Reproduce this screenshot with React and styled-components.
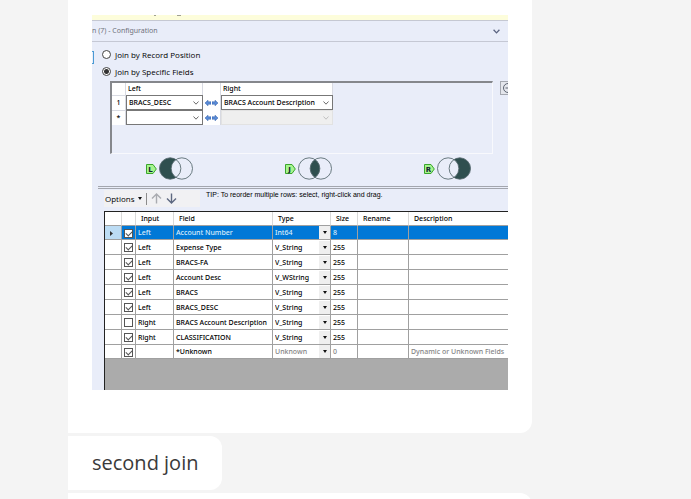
import React, { useState } from 'react';
import styled, { createGlobalStyle } from 'styled-components';

const GlobalStyle = createGlobalStyle`
    * {
        box-sizing: border-box;
    }

    body {
        margin: 0;
        background: #f4f4f4;
        font-family: 'Noto Sans', 'Open Sans', sans-serif;
        color: #1c1c1c;
    }

    button, input, select {
        margin: 0;
        font: inherit;
        color: inherit;
    }
`;

const Chat = styled.main`
    display: flex;
    flex-direction: column;
    align-items: flex-start;
    gap: 3px;
    height: 100vh;
    padding-left: 68px;
    overflow: hidden;
`;

const Bubble = styled.section`
    flex: none;
    width: ${props => props.$wide ? 'calc(100% - 24px)' : 'auto'};
    max-width: 464px;
    padding: ${props => props.$picture ? '15px 24px 43px' : '12px 24px'};
    border-radius: ${props => props.$picture ? '0 0 12px 0' : '0 12px 12px 0'};
    background: #fff;
    font-family: 'Open Sans', 'Noto Sans', sans-serif;
    font-size: 20px;
    line-height: 30px;
    color: #3a3a3a;
`;

const Window = styled.div`
    display: flex;
    flex-direction: column;
    overflow: hidden;
    background: #e9edf9;
    font-family: 'Noto Sans', 'Open Sans', sans-serif;
    font-size: 7px;
    font-weight: 500;
    line-height: 10px;
    color: #000;
`;

const Strip = styled.div`
    height: 6px;
    background: #fdfddb;
    border-bottom: 1px solid #c5c8d2;

    svg {
        display: block;
    }
`;

const TitleBar = styled.header`
    display: flex;
    align-items: center;
    justify-content: space-between;
    height: 21px;
    padding-right: 8px;
    border-bottom: 1px solid #c5c8d4;
    font-weight: 400;
    color: #6f727b;
`;

const IconButton = styled.button`
    display: flex;
    align-items: center;
    justify-content: center;
    padding: 0;
    border: 0;
    background: none;
`;

const Modes = styled.div`
    display: flex;
    gap: 8px;
    padding: 4px 0 1px;
`;

const SideTab = styled.div`
    width: 2px;
    height: 13px;
    margin-top: 5px;
    border: 1px solid #4a9ad4;
    border-left: 0;
`;

const RadioLabel = styled.label`
    display: flex;
    align-items: center;
    gap: 4px;
    height: 17px;
    font-family: 'Open Sans', 'Noto Sans', sans-serif;
    font-size: 8px;
    font-weight: 400;
`;

const Radio = styled.input`
    appearance: none;
    width: 9px;
    height: 9px;
    border: 1px solid #444;
    border-radius: 50%;
    background: #fff;

    &:checked {
        background: radial-gradient(circle, #333 0 2px, #fff 3px);
    }
`;

const JoinArea = styled.div`
    display: flex;
    gap: 7px;
    padding-left: 18px;
`;

const JoinBox = styled.div`
    flex: 1;
    height: 73px;
    border: 1px solid #f8f9fd;
    border-top: 2px solid #85878c;
    border-left: 2px solid #85878c;
`;

const JoinTable = styled.table`
    border-collapse: separate;
    border-spacing: 0;
    table-layout: fixed;
    width: 221px;
    background: #fff;

    th, td {
        height: 15px;
        padding: 0;
        border-right: 1px solid #d8dae2;
        font-weight: inherit;
        text-align: left;
    }

    td:nth-child(even) {
        border-right: 0;
    }

    thead th {
        height: 12px;
        padding-left: 2px;
    }

    tbody th {
        text-align: center;
        border-top: 1px solid #d8dae2;
    }
`;

const Picker = styled.div`
    position: relative;
    display: flex;
    align-items: center;
    height: 15px;
    border: 1px solid ${props => props.$off ? '#e2e2e2' : '#777'};
    background: ${props => props.$off ? '#efefef' : '#fff'};

    svg {
        position: absolute;
        right: 3px;
        top: 5px;
        pointer-events: none;
    }
`;

const PickerSelect = styled.select`
    appearance: none;
    width: 100%;
    padding: 0 0 0 2px;
    border: 0;
    background: none;
    opacity: 1;
`;

const Swap = styled.div`
    display: flex;
    justify-content: center;
    gap: 1px;
`;

const RemoveButton = styled(IconButton)`
    width: 8px;
    height: 14px;
    border: 1px solid #a5a8b0;
    border-right: 0;
    background: #e4e6ec;
    overflow: hidden;
    justify-content: flex-start;

    svg {
        flex: none;
    }
`;

const Outputs = styled.div`
    display: flex;
    justify-content: space-between;
    padding: 3px 37px 0 54px;
`;

const Output = styled.div`
    display: flex;
    align-items: center;
    gap: 2px;
    height: 23px;
`;

const Splitter = styled.div`
    height: 3px;
    margin: 6px 0 1px 6px;
    border-top: 1px solid #a3a6ae;
    border-bottom: 1px solid #a3a6ae;
`;

const Tools = styled.div`
    display: flex;
    gap: 6px;
    padding-left: 12px;
`;

const ToolBar = styled.div`
    display: flex;
    align-items: center;
    gap: 4px;
    width: 96px;
    height: 17px;
    padding-left: 1px;
    background: #f1f1f3;
`;

const OptionsButton = styled(IconButton)`
    gap: 3px;
    font-family: 'Open Sans', 'Noto Sans', sans-serif;
    font-size: 8px;
    font-weight: 400;
`;

const Divider = styled.div`
    width: 1px;
    height: 12px;
    background: #8c8c8c;
`;

const Tip = styled.p`
    margin: 0;
    font-family: 'Liberation Sans', Arial, sans-serif;
    white-space: nowrap;
`;

const FieldPane = styled.div`
    height: 179px;
    margin: 4px 0 0 12px;
    border-top: 1px solid #222;
    border-left: 1px solid #222;
    background: #ababab;
    overflow: hidden;
`;

const FieldTable = styled.table`
    border-collapse: separate;
    border-spacing: 0;
    table-layout: fixed;
    width: 100%;
    background: #fff;

    th, td {
        padding: 1px 0 0 2px;
        border-right: 1px solid #a0a0a0;
        border-bottom: 1px solid #a0a0a0;
        font-weight: inherit;
        text-align: left;
        white-space: nowrap;
    }

    th {
        height: 14px;
        padding-left: 5px;
        border-right-color: #d9d9d9;
    }

    th:last-child, td:last-child {
        border-right: 0;
    }
`;

const FieldRow = styled.tr`
    height: ${props => props.$selected || props.$unknown ? '14px' : '15px'};
    background: ${props => props.$selected ? '#0078d7' : '#fff'};
    color: ${props => props.$selected ? '#d9ecfb' : 'inherit'};

    td:nth-child(n + 5) {
        color: ${props => props.$unknown ? '#858585' : 'inherit'};
    }

    td:first-child {
        padding-left: 5px;
        background: ${props => props.$selected ? '#bcdcf4' : '#fff'};
    }

    td:nth-child(5) {
        padding-top: 0;
    }
`;

const Check = styled.input`
    appearance: none;
    display: block;
    width: 9px;
    height: 9px;
    border: 1px solid #555;
    background: #fff;

    &:checked::before {
        content: '';
        display: block;
        width: 5px;
        height: 3px;
        margin: 1px;
        border-left: 1px solid #555;
        border-bottom: 1px solid #555;
        transform: rotate(-45deg);
    }
`;

const TypeCell = styled.div`
    position: relative;
    display: flex;
    height: 13px;
`;

const TypeSelect = styled.select`
    appearance: none;
    width: 100%;
    padding: 1px 0 0;
    border: 0;
    background: none;
`;

const TypeArrow = styled.span`
    position: absolute;
    right: 0;
    top: 0;
    display: flex;
    align-items: center;
    justify-content: center;
    width: 11px;
    height: 13px;
    background: #efefef;
    pointer-events: none;
`;

const RowMarker = styled.svg`
    display: block;
`;

function Chevron(props) {
    return (
        <svg width={props.size} height={props.size - 2} viewBox='0 0 6 4'>
            <path d='M.5 .5 3 3.2 5.5 .5' fill='none' stroke={props.color} strokeWidth={props.bold ? 1.1 : 0.8}/>
        </svg>
    );
}

function Triangle() {
    return (
        <svg width='4' height='3' viewBox='0 0 4 3'>
            <path d='M0 0h4L2 3z' fill='#111'/>
        </svg>
    );
}

function SwapArrows() {
    return (
        <Swap>
            <svg width='6' height='6' viewBox='0 0 6 6'>
                <path d='M0 3 3 .2V1.8H6V4.2H3V5.8z' fill='#5b8cd8' stroke='#2c5aa5' strokeWidth='.5'/>
            </svg>
            <svg width='6' height='6' viewBox='0 0 6 6'>
                <path d='M6 3 3 .2V1.8H0V4.2H3V5.8z' fill='#5b8cd8' stroke='#2c5aa5' strokeWidth='.5'/>
            </svg>
        </Swap>
    );
}

function FieldPicker(props) {
    return (
        <Picker $off={props.off}>
            <PickerSelect aria-label={props.label} defaultValue={props.value} disabled={props.off}>
                <option>{props.value}</option>
            </PickerSelect>
            <Chevron size={6} color={props.off ? '#b5b5b5' : '#444'}/>
        </Picker>
    );
}

function Tag(props) {
    return (
        <svg width='11' height='10' viewBox='0 0 11 10'>
            <path d='M.5 .5H7L10.3 5 7 9.5H.5z' fill='#a6f58e' stroke='#3aa52c'/>
            <text x='4.5' y='7.5' textAnchor='middle' fontFamily='DejaVu Sans' fontWeight='bold' fontSize='7' fill='#123'>{props.name}</text>
        </svg>
    );
}

// L = outer left part, J = overlap, R = outer right part
const fills = {
    L: 'M17.5 2.3A11 11 0 1 0 17.5 20.7A11 11 0 0 1 17.5 2.3z',
    J: 'M17.5 2.3A11 11 0 0 1 17.5 20.7A11 11 0 0 1 17.5 2.3z',
    R: 'M17.5 2.3A11 11 0 1 1 17.5 20.7A11 11 0 0 0 17.5 2.3z',
};

function Venn(props) {
    return (
        <Output>
            <Tag name={props.name}/>
            <svg width='34' height='23' viewBox='0 0 35 23'>
                <path d={fills[props.name]} fill='#2f4f4f'/>
                <circle cx='11.5' cy='11.5' r='11' fill='none' stroke='#56696e' strokeWidth='.9'/>
                <circle cx='23.5' cy='11.5' r='11' fill='none' stroke='#56696e' strokeWidth='.9'/>
            </svg>
        </Output>
    );
}

const fields = [
    { input: 'Left', name: 'Account Number', type: 'Int64', size: '8', checked: true },
    { input: 'Left', name: 'Expense Type', type: 'V_String', size: '255', checked: true },
    { input: 'Left', name: 'BRACS-FA', type: 'V_String', size: '255', checked: true },
    { input: 'Left', name: 'Account Desc', type: 'V_WString', size: '255', checked: true },
    { input: 'Left', name: 'BRACS', type: 'V_String', size: '255', checked: true },
    { input: 'Left', name: 'BRACS_DESC', type: 'V_String', size: '255', checked: true },
    { input: 'Right', name: 'BRACS Account Description', type: 'V_String', size: '255', checked: false },
    { input: 'Right', name: 'CLASSIFICATION', type: 'V_String', size: '255', checked: true },
    { input: '', name: '*Unknown', type: 'Unknown', size: '0', checked: true, description: 'Dynamic or Unknown Fields' },
];

function Fields() {
    const [selected, setSelected] = useState(0);

    function renderRows() {
        return fields.map((field, index) => {
            const isSelected = index === selected;
            return (
                <FieldRow key={field.name} $selected={isSelected} $unknown={field.name === '*Unknown'} onClick={() => setSelected(index)}>
                    <td>
                        {isSelected && <RowMarker width='3' height='5' viewBox='0 0 3 5'><path d='M0 0 3 2.5 0 5z' fill='#333'/></RowMarker>}
                    </td>
                    <td><Check type='checkbox' aria-label={field.name} defaultChecked={field.checked}/></td>
                    <td>{field.input}</td>
                    <td>{field.name}</td>
                    <td>
                        <TypeCell>
                            <TypeSelect aria-label={'Type of ' + field.name} defaultValue={field.type}>
                                <option>{field.type}</option>
                            </TypeSelect>
                            <TypeArrow><Triangle/></TypeArrow>
                        </TypeCell>
                    </td>
                    <td>{field.size}</td>
                    <td/>
                    <td>{field.description}</td>
                </FieldRow>
            );
        });
    }

    return (
        <FieldPane>
            <FieldTable>
                <colgroup>
                    <col width='17'/>
                    <col width='14'/>
                    <col width='38'/>
                    <col width='99'/>
                    <col width='58'/>
                    <col width='27'/>
                    <col width='51'/>
                    <col/>
                </colgroup>
                <thead>
                    <tr>
                        <th/>
                        <th/>
                        <th>Input</th>
                        <th>Field</th>
                        <th>Type</th>
                        <th>Size</th>
                        <th>Rename</th>
                        <th>Description</th>
                    </tr>
                </thead>
                <tbody>{renderRows()}</tbody>
            </FieldTable>
        </FieldPane>
    );
}

function JoinConfiguration() {
    const [mode, setMode] = useState('fields');

    return (
        <Window>
            <Strip>
                <svg width='100' height='5' viewBox='0 0 100 5'>
                    <path d='M62 0h2M85 0h4' stroke='#444'/>
                </svg>
            </Strip>
            <TitleBar>
                <span>n (7) - Configuration</span>
                <IconButton aria-label='Collapse'><Chevron size={7} color='#5a6380' bold/></IconButton>
            </TitleBar>
            <Modes>
                <SideTab/>
                <div>
                    <RadioLabel>
                        <Radio type='radio' name='mode' checked={mode === 'position'} onChange={() => setMode('position')}/>
                        Join by Record Position
                    </RadioLabel>
                    <RadioLabel>
                        <Radio type='radio' name='mode' checked={mode === 'fields'} onChange={() => setMode('fields')}/>
                        Join by Specific Fields
                    </RadioLabel>
                </div>
            </Modes>
            <JoinArea>
                <JoinBox>
                    <JoinTable>
                        <colgroup>
                            <col width='14'/>
                            <col width='77'/>
                            <col width='18'/>
                            <col width='112'/>
                        </colgroup>
                        <thead>
                            <tr>
                                <th/>
                                <th>Left</th>
                                <th/>
                                <th>Right</th>
                            </tr>
                        </thead>
                        <tbody>
                            <tr>
                                <th>1</th>
                                <td><FieldPicker label='Left field 1' value='BRACS_DESC'/></td>
                                <td><SwapArrows/></td>
                                <td><FieldPicker label='Right field 1' value='BRACS Account Description'/></td>
                            </tr>
                            <tr>
                                <th>*</th>
                                <td><FieldPicker label='New left field' value=''/></td>
                                <td><SwapArrows/></td>
                                <td><FieldPicker label='New right field' value='' off/></td>
                            </tr>
                        </tbody>
                    </JoinTable>
                </JoinBox>
                <RemoveButton aria-label='Remove'>
                    <svg width='12' height='12' viewBox='0 0 12 12'>
                        <circle cx='7' cy='6' r='4.5' fill='none' stroke='#5c6370'/>
                        <path d='M4.5 6h5' stroke='#5c6370'/>
                    </svg>
                </RemoveButton>
            </JoinArea>
            <Outputs>
                <Venn name='L'/>
                <Venn name='J'/>
                <Venn name='R'/>
            </Outputs>
            <Splitter/>
            <Tools>
                <ToolBar>
                    <OptionsButton>Options <Triangle/></OptionsButton>
                    <Divider/>
                    <IconButton aria-label='Move up'>
                        <svg width='11' height='11' viewBox='0 0 11 11'>
                            <path d='M5.5 10.5V1M1 5.5 5.5 1 10 5.5' fill='none' stroke='#a9abb0' strokeWidth='1.4'/>
                        </svg>
                    </IconButton>
                    <IconButton aria-label='Move down'>
                        <svg width='11' height='11' viewBox='0 0 11 11'>
                            <path d='M5.5 .5V10M1 5.5 5.5 10 10 5.5' fill='none' stroke='#5d6880' strokeWidth='1.4'/>
                        </svg>
                    </IconButton>
                </ToolBar>
                <Tip>TIP: To reorder multiple rows: select, right-click and drag.</Tip>
            </Tools>
            <Fields/>
        </Window>
    );
}

function App() {
    return (
        <>
            <GlobalStyle/>
            <Chat>
                <Bubble $wide $picture>
                    <JoinConfiguration/>
                </Bubble>
                <Bubble>second join</Bubble>
                <Bubble $wide/>
            </Chat>
        </>
    );
}

export default App;
